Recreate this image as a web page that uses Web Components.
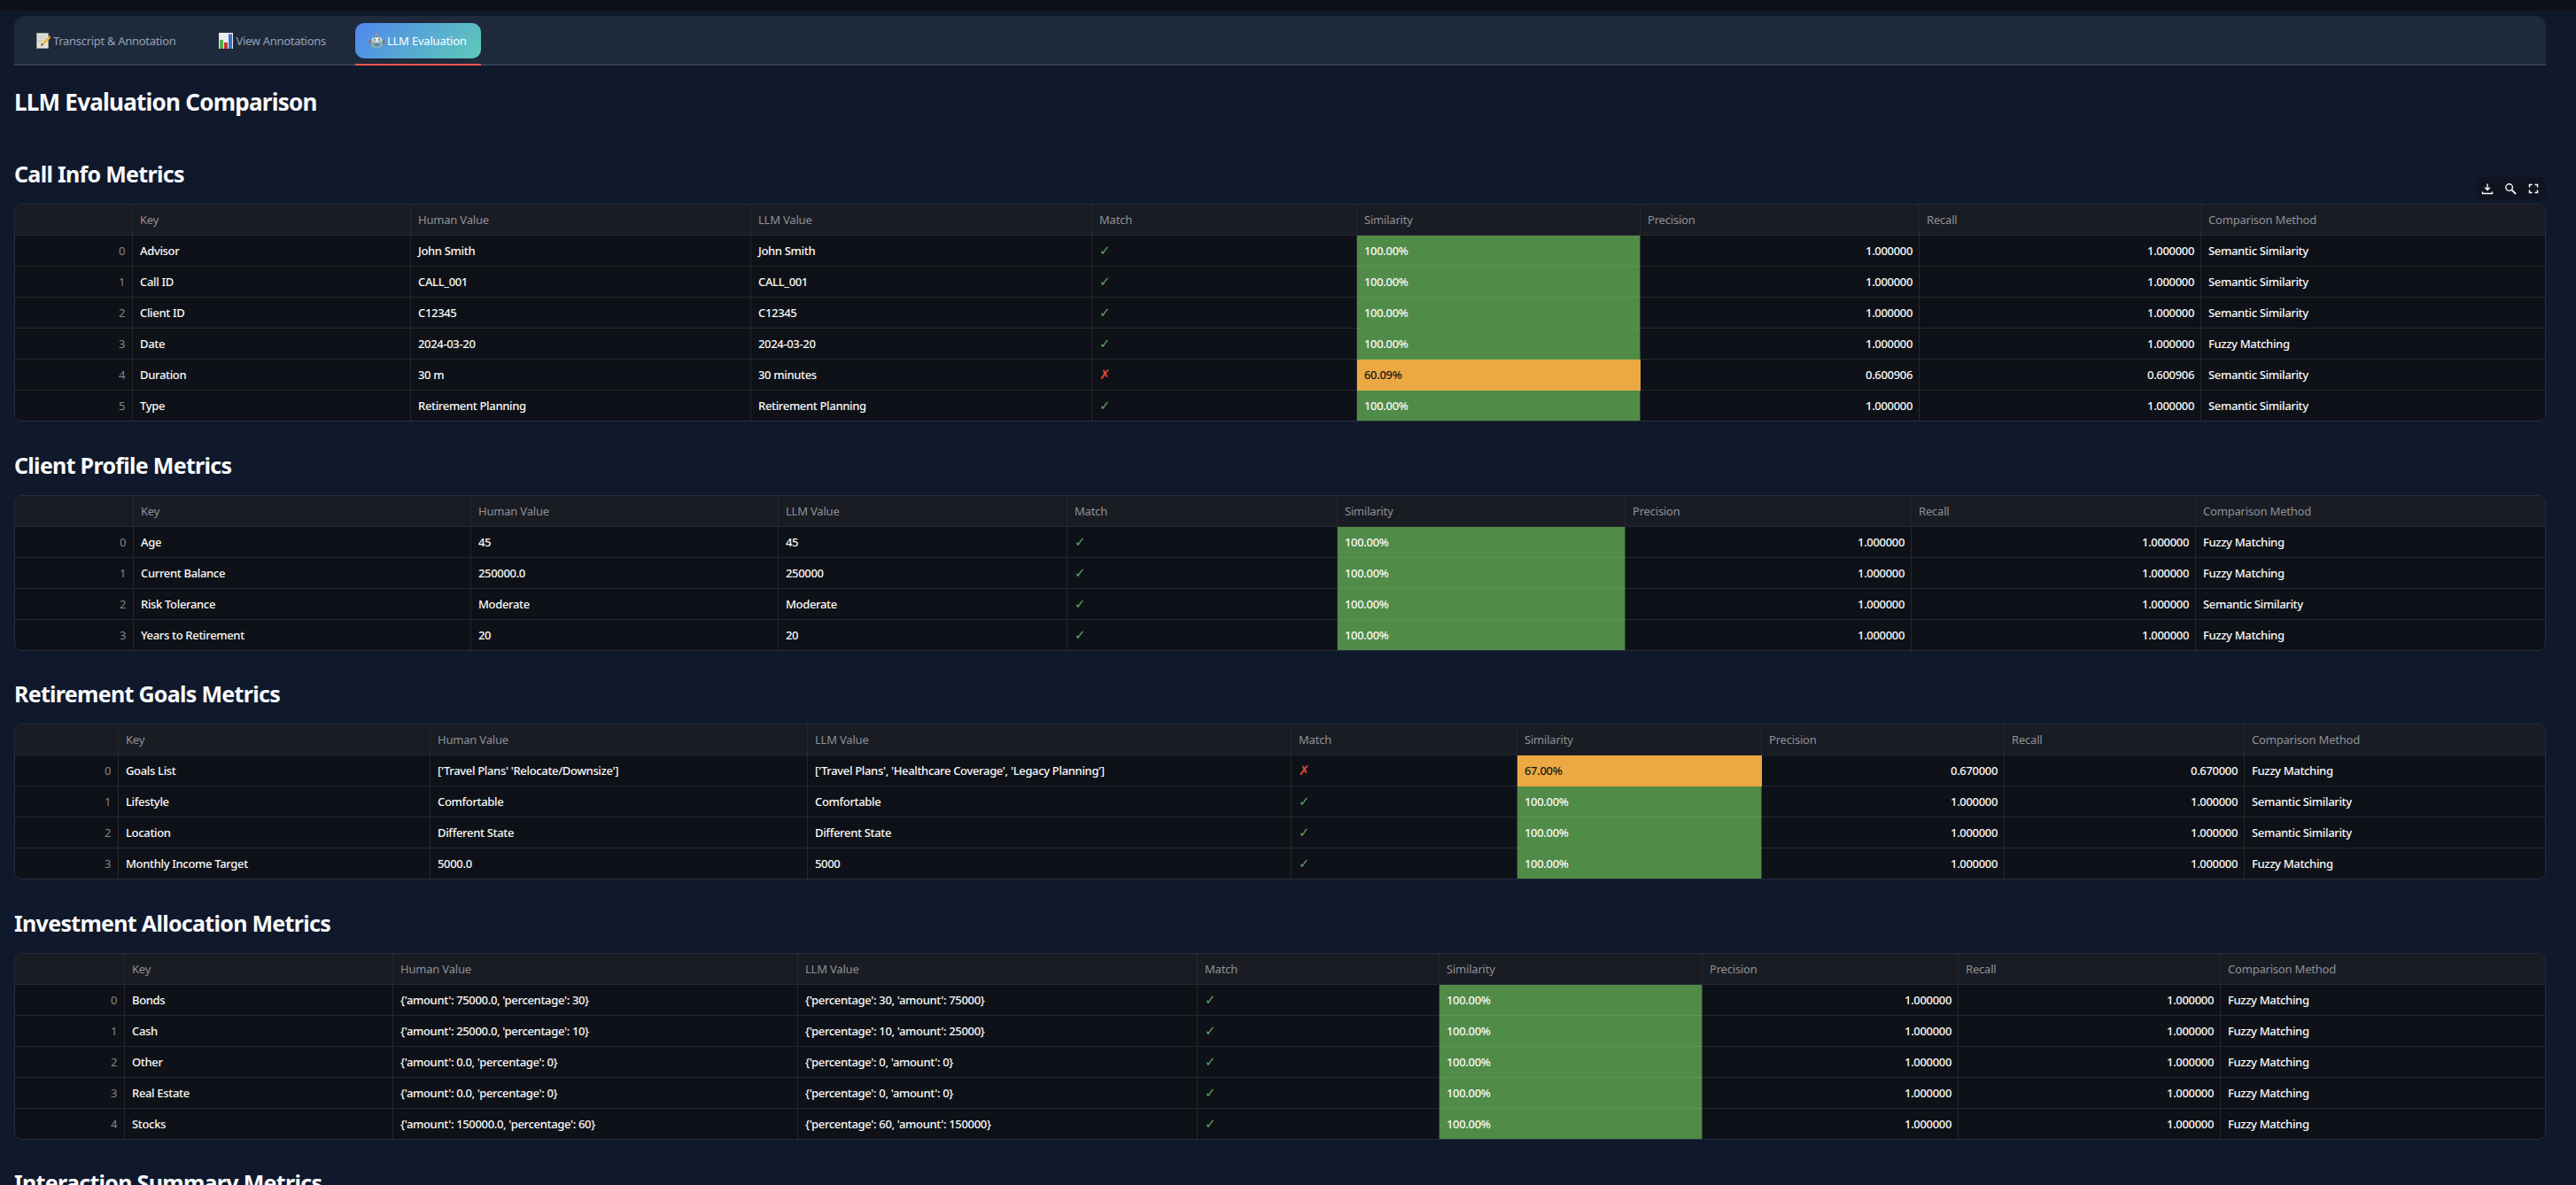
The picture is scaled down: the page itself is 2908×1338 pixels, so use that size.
<!DOCTYPE html>
<html lang="en">
<head>
<meta charset="utf-8">
<title>LLM Evaluation</title>
<style>
  html, body { margin: 0; height: 1338px; overflow: hidden; background: #10182b; }
  body { font-family: "Noto Sans", "Liberation Sans", sans-serif; color: #fafafa; }
</style>
</head>
<body>

<eval-page>
  <tab-bar>
    <tab-item icon="memo">Transcript &amp; Annotation</tab-item>
    <tab-item icon="chart">View Annotations</tab-item>
    <tab-item icon="robot" active>LLM Evaluation</tab-item>
  </tab-bar>
  <page-title>LLM Evaluation Comparison</page-title>

  <metric-section first toolbar cols="133 314 384 385 299 320 315 318" data-table="call">Call Info Metrics</metric-section>
  <metric-section cols="134 381 347 326 305 325 323 321" data-table="client">Client Profile Metrics</metric-section>
  <metric-section cols="117 352 426 546 255 276 274 271" data-table="goals">Retirement Goals Metrics</metric-section>
  <metric-section cols="124 303 457 451 273 297 289 296" data-table="invest">Investment Allocation Metrics</metric-section>
  <metric-section cols="124 303 457 451 273 296 290 296" data-table="none">Interaction Summary Metrics</metric-section>
</eval-page>

<script>
// data for the tables: key, human, llm, match, similarity, precision, recall, method
const SEM = 'Semantic Similarity', FUZ = 'Fuzzy Matching';
const TABLES = {
  call: [
    ['Advisor', 'John Smith', 'John Smith', 1, '100.00%', '1.000000', '1.000000', SEM],
    ['Call ID', 'CALL_001', 'CALL_001', 1, '100.00%', '1.000000', '1.000000', SEM],
    ['Client ID', 'C12345', 'C12345', 1, '100.00%', '1.000000', '1.000000', SEM],
    ['Date', '2024-03-20', '2024-03-20', 1, '100.00%', '1.000000', '1.000000', FUZ],
    ['Duration', '30 m', '30 minutes', 0, '60.09%', '0.600906', '0.600906', SEM],
    ['Type', 'Retirement Planning', 'Retirement Planning', 1, '100.00%', '1.000000', '1.000000', SEM]
  ],
  client: [
    ['Age', '45', '45', 1, '100.00%', '1.000000', '1.000000', FUZ],
    ['Current Balance', '250000.0', '250000', 1, '100.00%', '1.000000', '1.000000', FUZ],
    ['Risk Tolerance', 'Moderate', 'Moderate', 1, '100.00%', '1.000000', '1.000000', SEM],
    ['Years to Retirement', '20', '20', 1, '100.00%', '1.000000', '1.000000', FUZ]
  ],
  goals: [
    ['Goals List', "['Travel Plans' 'Relocate/Downsize']", "['Travel Plans', 'Healthcare Coverage', 'Legacy Planning']", 0, '67.00%', '0.670000', '0.670000', FUZ],
    ['Lifestyle', 'Comfortable', 'Comfortable', 1, '100.00%', '1.000000', '1.000000', SEM],
    ['Location', 'Different State', 'Different State', 1, '100.00%', '1.000000', '1.000000', SEM],
    ['Monthly Income Target', '5000.0', '5000', 1, '100.00%', '1.000000', '1.000000', FUZ]
  ],
  invest: [
    ['Bonds', "{'amount': 75000.0, 'percentage': 30}", "{'percentage': 30, 'amount': 75000}", 1, '100.00%', '1.000000', '1.000000', FUZ],
    ['Cash', "{'amount': 25000.0, 'percentage': 10}", "{'percentage': 10, 'amount': 25000}", 1, '100.00%', '1.000000', '1.000000', FUZ],
    ['Other', "{'amount': 0.0, 'percentage': 0}", "{'percentage': 0, 'amount': 0}", 1, '100.00%', '1.000000', '1.000000', FUZ],
    ['Real Estate', "{'amount': 0.0, 'percentage': 0}", "{'percentage': 0, 'amount': 0}", 1, '100.00%', '1.000000', '1.000000', FUZ],
    ['Stocks', "{'amount': 150000.0, 'percentage': 60}", "{'percentage': 60, 'amount': 150000}", 1, '100.00%', '1.000000', '1.000000', FUZ]
  ],
  none: []
};
const HEADERS = ['', 'Key', 'Human Value', 'LLM Value', 'Match', 'Similarity', 'Precision', 'Recall', 'Comparison Method'];

const EMOJI = {
  memo: `<svg viewBox="0 0 16 18" width="16" height="18">
    <rect x="0.5" y="0.5" width="13" height="17" fill="#e4e4e0" stroke="#a9a9a4" stroke-width=".6"/>
    <path d="M2 3.5h9M2 6h9M2 8.5h6M2 11h4" stroke="#b5b5b0" stroke-width=".8"/>
    <path d="M5 15l1-3 8-8 2 2-8 8z" fill="#f2b632"/><path d="M14 4l1-1 1.4 1.4-1 1.2z" fill="#e2807a"/><path d="M5 15l1-3 2 2z" fill="#5a4a36"/></svg>`,
  chart: `<svg viewBox="0 0 16 18" width="16" height="18">
    <rect width="16" height="18" fill="#e9ebee"/>
    <rect x="1" y="8" width="4" height="10" fill="#4fb04a"/><rect x="6" y="11" width="4" height="7" fill="#c4352d"/><rect x="11" y="1.5" width="4" height="16.5" fill="#3a70c4"/></svg>`,
  robot: `<svg viewBox="0 0 17 18" width="17" height="18">
    <circle cx="8.5" cy="1.8" r="1.4" fill="#e8913a"/><rect x="8" y="2.5" width="1" height="2.5" fill="#6f7f86"/>
    <rect x="0" y="8" width="2.5" height="5" rx="1" fill="#c9453f"/><rect x="14.5" y="8" width="2.5" height="5" rx="1" fill="#c9453f"/>
    <rect x="1.5" y="4.5" width="14" height="12.5" rx="4.5" fill="#7fb0b8"/>
    <ellipse cx="8.5" cy="8" rx="5.6" ry="2.4" fill="#e2ecee"/>
    <circle cx="5.8" cy="8" r="1" fill="#3a4c56"/><circle cx="11.2" cy="8" r="1" fill="#3a4c56"/>
    <rect x="5.5" y="12.8" width="6" height="1.8" rx=".8" fill="#4c6a76"/></svg>`
};

function define(name, css, html, extra) {
  customElements.define(name, class extends HTMLElement {
    constructor() {
      super();
      this.attachShadow({ mode: 'open' });
      this.shadowRoot.innerHTML = `<style>${css}</style>${html}`;
    }
    connectedCallback() { if (extra) extra.call(this, this.shadowRoot); }
  });
}

define('eval-page', `
  :host { display: flex; flex-direction: column; box-sizing: border-box; height: 1338px; padding: 0 34px 0 16px;
    background: #10182b; overflow: hidden; }
  .top { height: 12px; margin: 0 -34px 6px -16px; background: #0e1117; flex: none; }
`, `<div class="top"></div><slot></slot>`);

define('tab-bar', `
  :host { display: flex; align-items: center; flex: none; gap: 17px; box-sizing: border-box; height: 56px; padding: 0 9px;
    background: #1e293b; border-bottom: 2px solid #334155; border-radius: 12px 12px 0 0; }
`, `<slot></slot>`);

define('tab-item', `
  :host { display: flex; align-items: center; gap: 3px; box-sizing: border-box; height: 40px; margin-top: 2px; padding: 0 16px;
    font-size: 13px; color: #94a3b8; border-radius: 10px; position: relative; white-space: nowrap; letter-spacing: -.3px; }
  :host([active]) { color: #fff; background: linear-gradient(135deg, #4f86ee, #5fcbb9); letter-spacing: -.2px; }
  :host([active])::after { content: ''; position: absolute; left: 0; right: 0; bottom: -8px; height: 2px; background: #ef5350; }
  .ic { display: flex; }
`, `<span class="ic"></span><slot></slot>`, function (root) {
  root.querySelector('.ic').innerHTML = EMOJI[this.getAttribute('icon')];
});

define('page-title', `
  :host { display: block; flex: none; margin-top: 19px; height: 44px; line-height: 44px; font-size: 26px; font-weight: 700;
    color: #f8fafc; letter-spacing: -.75px; white-space: nowrap; }
`, `<slot></slot>`);

define('table-toolbar', `
  :host { position: absolute; right: 0; top: -30px; display: flex; align-items: center; gap: 12px;
    box-sizing: border-box; width: 78px; height: 26px; padding: 0 5px; background: #0f1420; border-radius: 6px; }
  svg { width: 14px; height: 14px; fill: none; stroke: #fafafa; stroke-width: 1.4; }
`, `<svg viewBox="0 0 14 14"><path d="M7 1.5v7M4.2 5.8 7 8.6l2.8-2.8M1.5 10.5v2h11v-2"/></svg>
<svg viewBox="0 0 14 14"><circle cx="5.6" cy="5.6" r="3.8"/><path d="M8.4 8.4 13 13" stroke-width="1.8"/></svg>
<svg viewBox="0 0 14 14"><path d="M2.5 5.5v-3h3M8.5 2.5h3v3M11.5 8.5v3h-3M5.5 11.5h-3v-3" stroke-width="1.5"/></svg>`);

define('metric-table', `
  :host { display: block; position: relative; flex: none; }
  .box { border: 1px solid #262d3d; border-radius: 8px; overflow: hidden; display: grid; background: #0e1117; opacity: .999; }
  .c { box-sizing: border-box; height: 35px; line-height: 34px; padding: 0 8px; font-size: 13px; font-weight: 500; white-space: nowrap; overflow: hidden;
    border-right: 1px solid #262830; border-bottom: 1px solid #262830; color: #fafafa; letter-spacing: -.33px; }
  .c:nth-child(9n) { border-right: 0; }
  .h { background: #1a1c24; color: #8f9197; font-weight: 400; letter-spacing: -.2px; }
  .i { text-align: right; color: #84868c; font-weight: 400; }
  .r { text-align: right; padding-right: 7px; }
  .yes { color: #5fa55f; font-family: "DejaVu Sans", sans-serif; font-size: 15px; font-weight: 400; }
  .no { color: #e0483f; font-family: "DejaVu Sans", sans-serif; font-size: 15px; font-weight: 400; }
  .g { background: #508b48; border-bottom-color: #5a9650; border-right-color: #2f4a2d; }
  .o { background: #eca942; color: #14161a; border-bottom-color: #eca942; border-right-color: #eca942; }
  .last { border-bottom: 0; height: 34px; }
`, `<div class="box"></div>`, function (root) {
  const box = root.querySelector('.box');
  box.style.gridTemplateColumns = this.getAttribute('cols').split(' ').map(w => w + 'px').join(' ') + ' 1fr';
  const rows = TABLES[this.getAttribute('table')];
  let html = HEADERS.map(h => `<div class="c h">${h}</div>`).join('');
  rows.forEach((r, n) => {
    const last = n === rows.length - 1 ? ' last' : '';
    const sim = r[4] === '100.00%' ? 'g' : 'o';
    html += `<div class="c i${last}">${n}</div><div class="c${last}">${r[0]}</div><div class="c${last}">${r[1]}</div><div class="c${last}">${r[2]}</div>` +
      `<div class="c ${r[3] ? 'yes' : 'no'}${last}">${r[3] ? '✓' : '✗'}</div><div class="c ${sim}${last}">${r[4]}</div>` +
      `<div class="c r${last}">${r[5]}</div><div class="c r${last}">${r[6]}</div><div class="c${last}">${r[7]}</div>`;
  });
  box.innerHTML = html;
  if (this.hasAttribute('toolbar')) root.appendChild(document.createElement('table-toolbar'));
});

define('metric-section', `
  :host { display: block; flex: none; margin-top: 26.5px; }
  :host([first]) { margin-top: 37px; }
  h2 { margin: 0 0 12px; height: 44px; line-height: 44px; font-size: 25px; font-weight: 700; color: #f8fafc; letter-spacing: -.7px; white-space: nowrap; }
`, `<h2><slot></slot></h2><div class="t"></div>`, function (root) {
  const table = this.dataset.table;
  if (table === 'none') return;
  const t = document.createElement('metric-table');
  t.setAttribute('cols', this.getAttribute('cols'));
  t.setAttribute('table', table);
  if (this.hasAttribute('toolbar')) t.setAttribute('toolbar', '');
  root.querySelector('.t').appendChild(t);
});
</script>
</body>
</html>
